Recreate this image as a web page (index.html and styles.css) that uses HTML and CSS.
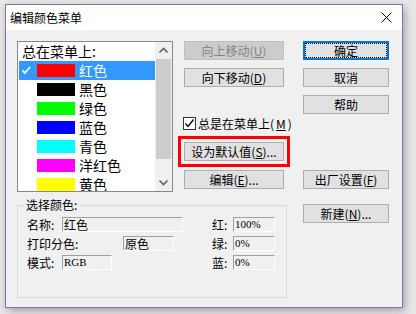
FILE: index.html
```html
<!DOCTYPE html>
<html lang="zh-CN">
<head>
  <meta charset="UTF-8" />
  <title>编辑颜色菜单</title>
  <link rel="stylesheet" href="styles.css">
</head>
<body>

<div class="window">
  <div class="titlebar">
    <span class="title">编辑颜色菜单</span>
    <svg class="close" width="11" height="11" viewBox="0 0 11 11">
      <path d="M0.5 0.5 L10.5 10.5 M10.5 0.5 L0.5 10.5" stroke="#000" stroke-width="1" fill="none"/>
    </svg>
  </div>

  <div class="client">
    <div class="left">
      <div class="top-row">
        <div class="listbox">
          <div class="items">
            <div class="list-head">总在菜单上:</div>
            <div class="item selected">
              <span class="check">
                <svg width="18" height="19" viewBox="0 0 18 19"><polyline points="3.5,9.5 6,12 11,6" fill="none" stroke="#fff" stroke-width="1.8"/></svg>
              </span>
              <span class="swatch sw-red"></span>红色
            </div>
            <div class="item"><span class="check"></span><span class="swatch sw-black"></span>黑色</div>
            <div class="item"><span class="check"></span><span class="swatch sw-green"></span>绿色</div>
            <div class="item"><span class="check"></span><span class="swatch sw-blue"></span>蓝色</div>
            <div class="item"><span class="check"></span><span class="swatch sw-cyan"></span>青色</div>
            <div class="item"><span class="check"></span><span class="swatch sw-magenta"></span>洋红色</div>
            <div class="item"><span class="check"></span><span class="swatch sw-yellow"></span>黄色</div>
          </div>
          <div class="scrollbar">
            <div class="sb-arrow">
              <svg width="17" height="17" viewBox="0 0 17 17"><polyline points="4.5,10.5 8.5,6.5 12.5,10.5" fill="none" stroke="#606060" stroke-width="1.6"/></svg>
            </div>
            <div class="sb-track"><div class="sb-thumb"></div></div>
            <div class="sb-arrow">
              <svg width="17" height="17" viewBox="0 0 17 17"><polyline points="4.5,6.5 8.5,10.5 12.5,6.5" fill="none" stroke="#606060" stroke-width="1.6"/></svg>
            </div>
          </div>
        </div>

        <div class="mid-col">
          <button class="btn" disabled>向上移动(<u>U</u>)</button>
          <button class="btn gap-8">向下移动(<u>D</u>)</button>
          <label class="checkrow">
            <span class="checkbox">
              <svg width="11" height="11" viewBox="0 0 11 11"><polyline points="1.5,5.5 4,8.5 9.5,1.5" fill="none" stroke="#000" stroke-width="1.3"/></svg>
            </span>
            总是在菜单上(<u>M</u>)
          </label>
          <button class="btn marked">设为默认值(<u>S</u>)...</button>
          <button class="btn gap-9">编辑(<u>E</u>)...</button>
        </div>
      </div>

      <fieldset class="group">
        <legend>选择颜色:</legend>
        <div class="group-body">
          <div class="fields">
            <div class="field-row">
              <span class="lbl w-35">名称:</span>
              <span class="field w-121">红色</span>
            </div>
            <div class="field-row">
              <span class="lbl w-96">打印分色:</span>
              <span class="field w-51">原色</span>
            </div>
            <div class="field-row">
              <span class="lbl w-35">模式:</span>
              <span class="field latin w-50">RGB</span>
            </div>
          </div>
          <div class="fields rgb">
            <div class="field-row">
              <span class="lbl w-21">红:</span>
              <span class="field latin w-42">100%</span>
            </div>
            <div class="field-row">
              <span class="lbl w-21">绿:</span>
              <span class="field latin w-42">0%</span>
            </div>
            <div class="field-row">
              <span class="lbl w-21">蓝:</span>
              <span class="field latin w-42">0%</span>
            </div>
          </div>
        </div>
      </fieldset>
    </div>

    <div class="right-col">
      <button class="btn default">确定</button>
      <button class="btn gap-8">取消</button>
      <button class="btn gap-8">帮助</button>
      <button class="btn gap-56">出厂设置(<u>F</u>)</button>
      <button class="btn gap-15">新建(<u>N</u>)...</button>
    </div>
  </div>
</div>

</body>
</html>
```

FILE: styles.css
```css
* {
  box-sizing: border-box;
}

body {
  margin: 0;
  width: 416px;
  height: 314px;
  overflow: hidden;
  background: #e8e8e8;
  font-family: "Noto Sans CJK SC", "Noto Sans", sans-serif;
  font-size: 12px;
  color: #000;
}

.window {
  margin: 4px 0 0 5px;
  width: 398px;
  height: 304px;
  border: 1px solid #8b6cb5;
  background: #f0f0f0;
  box-shadow: 2px 3px 8px rgba(0,0,0,0.3);
  display: flex;
  flex-direction: column;
}

.titlebar {
  height: 25px;
  flex: none;
  background: #fff;
  display: flex;
  align-items: center;
  justify-content: space-between;
  padding: 0 10px 0 4px;
}

.title {
  font-size: 12px;
  line-height: 14px;
}

.client {
  flex: 1;
  display: flex;
  padding: 11px 0 0 11px;
}

.left {
  width: 270px;
}

.top-row {
  display: flex;
  gap: 11px;
  height: 151px;
}

/* list box */
.listbox {
  width: 156px;
  height: 151px;
  border: 1px solid #828790;
  background: #fff;
  display: flex;
}

.items {
  flex: 1;
  padding-left: 1px;
  overflow: hidden;
}

.list-head {
  height: 19px;
  line-height: 19px;
  padding-left: 3px;
  font-size: 14px;
}

.item {
  height: 19px;
  display: flex;
  align-items: center;
  font-size: 14px;
  line-height: 19px;
}

.item.selected {
  background: #3399ff;
  color: #fff;
}

.check {
  width: 18px;
  height: 19px;
  flex: none;
}

.check svg {
  display: block;
}

.swatch {
  width: 38px;
  height: 13px;
  margin-right: 4px;
  flex: none;
}

.sw-red { background: #ff0000; }
.sw-black { background: #000000; }
.sw-green { background: #00ff00; }
.sw-blue { background: #0000ff; }
.sw-cyan { background: #00ffff; }
.sw-magenta { background: #ff00ff; }
.sw-yellow { background: #ffff00; }

.scrollbar {
  width: 17px;
  flex: none;
  background: #f0f0f0;
  display: flex;
  flex-direction: column;
}

.sb-arrow {
  height: 17px;
  flex: none;
}

.sb-arrow svg {
  display: block;
}

.sb-track {
  flex: 1;
  padding: 0 1px;
}

.sb-thumb {
  height: 100px;
  background: #cdcdcd;
}

/* buttons */
.btn {
  display: block;
  height: 19px;
  padding: 0;
  border: 1px solid #adadad;
  background: #e1e1e1;
  font-family: inherit;
  font-size: 12px;
  line-height: 17px;
  color: #000;
  text-align: center;
  position: relative;
}

.btn[disabled] {
  background: #cccccc;
  border-color: #bfbfbf;
  color: #838383;
}

.btn.default {
  border: 2px solid #0078d7;
  line-height: 15px;
}

.btn.default::after {
  content: "";
  position: absolute;
  inset: 0;
  border: 1px dotted #000;
}

.btn.marked {
  margin-top: 12px;
  outline: 3px solid #ff0000;
  outline-offset: 3px;
}

.gap-8 { margin-top: 8px; }
.gap-9 { margin-top: 9px; }
.gap-15 { margin-top: 15px; }
.gap-56 { margin-top: 56px; }

.mid-col {
  width: 100px;
  display: flex;
  flex-direction: column;
}

.mid-col .btn,
.right-col .btn {
  width: 100%;
}

.checkrow {
  margin: 30px 0 0 -1px;
  height: 13px;
  display: flex;
  align-items: center;
  gap: 2px;
  line-height: 13px;
  white-space: nowrap;
}

.checkbox {
  width: 13px;
  height: 13px;
  border: 1px solid #333;
  background: #fff;
  flex: none;
}

.checkbox svg {
  display: block;
}

.right-col {
  width: 86px;
  margin-left: 16px;
  display: flex;
  flex-direction: column;
}

/* group box */
.group {
  margin: 7px 0 0;
  padding: 6px 0 0 9px;
  height: 99px;
  border: 1px solid #dcdcdc;
  min-width: 0;
}

.group legend {
  margin-left: -3px;
  padding: 0 2px;
  font-size: 12px;
  line-height: 12px;
}

.group-body {
  display: flex;
}

.fields {
  display: flex;
  flex-direction: column;
  gap: 4px;
}

.fields.rgb {
  margin-left: 29px;
}

.field-row {
  display: flex;
  height: 15px;
  align-items: center;
}

.lbl {
  flex: none;
  line-height: 15px;
}

.field {
  height: 15px;
  border-top: 1px solid #a0a0a0;
  border-left: 1px solid #a0a0a0;
  border-right: 1px solid #fff;
  border-bottom: 1px solid #fff;
  background: #f0f0f0;
  padding-left: 1px;
  line-height: 13px;
  white-space: nowrap;
  overflow: hidden;
}

.field.latin {
  font-family: "Liberation Serif", serif;
  font-size: 11px;
}

.w-21 { width: 21px; }
.w-35 { width: 35px; }
.w-42 { width: 42px; }
.w-50 { width: 50px; }
.w-51 { width: 51px; }
.w-96 { width: 96px; }
.w-121 { width: 121px; }
```
